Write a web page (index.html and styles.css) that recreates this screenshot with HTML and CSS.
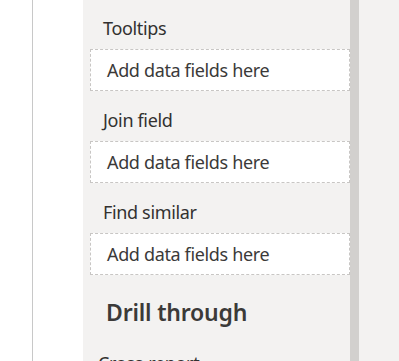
FILE: index.html
```html
<!DOCTYPE html>
<html lang="en">
   <head>
      <meta charset="UTF-8" />
      <meta name="viewport" content="width=device-width, initial-scale=1.0" />
      <title>Fields pane</title>
      <link rel="stylesheet" href="styles.css">
   </head>
   <body>
      <div class="app">
         <div class="rail"></div>
         <div class="gap"></div>
         <div class="pane">
            <div class="well-label first">Tooltips</div>
            <div class="well">Add data fields here</div>

            <div class="well-label">Join field</div>
            <div class="well">Add data fields here</div>

            <div class="well-label">Find similar</div>
            <div class="well">Add data fields here</div>

            <h2 class="section-title">Drill through</h2>
            <div class="sub-label">Cross-report</div>
         </div>
         <div class="scrollbar"></div>
         <div class="canvas"></div>
      </div>
   </body>
</html>
```

FILE: styles.css
```css
* {
   box-sizing: border-box;
}

body {
   margin: 0;
   background-color: #fff;
   font-family: 'Segoe UI', 'Noto Sans', sans-serif;
   color: #323130;
   overflow: hidden;
}

.app {
   display: flex;
   height: 361px;
}

.rail {
   width: 33px;
   border-right: 1px solid #c8c8c8;
}

.gap {
   width: 50px;
}

.pane {
   width: 267px;
   background-color: #f3f2f1;
   padding: 0 0 0 7px;
}

.well-label {
   font-size: 18px;
   line-height: 24px;
   letter-spacing: -0.35px;
   margin: 17px 0 9px 13px;
   color: #323130;
}

.well-label.first {
   margin-top: 16px;
}

.well {
   height: 42px;
   line-height: 40px;
   font-size: 18px;
   letter-spacing: -0.35px;
   padding-left: 16px;
   background: #fff;
   border: 1px dashed #c8c6c4;
   color: #3b3a39;
}

.section-title {
   margin: 22px 0 0 16px;
   font-size: 23px;
   line-height: 30px;
   font-weight: 600;
   letter-spacing: -0.2px;
   color: #3b3a39;
}

.sub-label {
   margin: 24px 0 0 8px;
   font-size: 18px;
   line-height: 24px;
   letter-spacing: -0.35px;
}

.scrollbar {
   width: 9px;
   background-color: #d2d0ce;
}

.canvas {
   flex: 1;
   background-color: #f3f2f1;
}
```
